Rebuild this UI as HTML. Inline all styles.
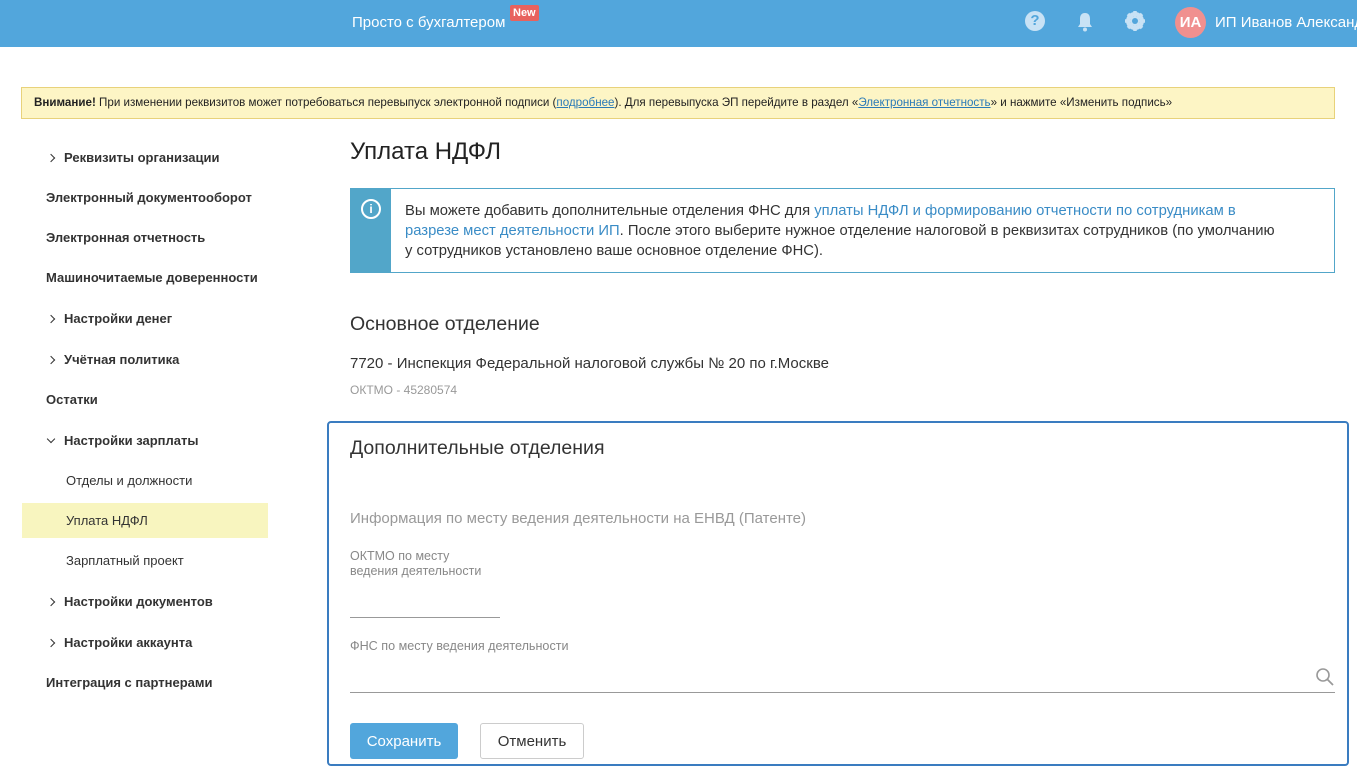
<!DOCTYPE html>
<html><head><meta charset="utf-8"><style>
*{box-sizing:border-box;margin:0;padding:0}
body{width:1357px;height:769px;overflow:hidden;background:#fff;font-family:"Liberation Sans",sans-serif;color:#333;position:relative}
.a{position:absolute;white-space:nowrap}
.hdr{position:absolute;left:0;top:0;width:1357px;height:47px;background:#52a6dc}
.side{font-size:13px;font-weight:bold;color:#333}
.sub{font-size:13px;color:#333}
.chev{display:inline-block;width:6px;height:6px;border-right:1.6px solid #333;border-bottom:1.6px solid #333;transform:rotate(-45deg);margin-right:10px;position:relative;top:-1px}
.chevd{transform:rotate(45deg);top:-3px}
</style></head><body>
<div class="hdr"></div>
<div class="a" style="left:352px;top:14px;font-size:15px;color:#fff">Просто с бухгалтером</div>
<div class="a" style="left:510px;top:5px;background:#e8625e;color:#fff;font-size:11px;font-weight:bold;padding:2px 3px;border-radius:2px">New</div>
<div class="a" style="left:1025px;top:11px;width:20px;height:20px;border-radius:50%;background:#c8e2f5;color:#52a6dc;font-weight:bold;font-size:15px;text-align:center;line-height:20px">?</div>
<svg class="a" style="left:1075px;top:11px" width="20" height="22" viewBox="0 0 20 22"><path d="M10 2c-4 0-5 3-5 6v5l-2 3h14l-2-3V8c0-3-1-6-5-6z" fill="#c8e2f5"/><circle cx="10" cy="18.5" r="2" fill="#c8e2f5"/></svg>
<svg class="a" style="left:1124px;top:10px" width="22" height="22" viewBox="0 0 22 22"><circle cx="11" cy="11" r="7" fill="none" stroke="#c8e2f5" stroke-width="4"/><g stroke="#c8e2f5" stroke-width="3.5"><line x1="11" y1="1" x2="11" y2="21"/><line x1="1" y1="11" x2="21" y2="11"/><line x1="4" y1="4" x2="18" y2="18"/><line x1="18" y1="4" x2="4" y2="18"/></g><circle cx="11" cy="11" r="3" fill="#52a6dc"/></svg>
<div class="a" style="left:1175px;top:7px;width:31px;height:31px;border-radius:50%;background:#f0908f;color:#fff;font-weight:bold;font-size:15px;text-align:center;line-height:31px">ИА</div>
<div class="a" style="left:1215px;top:14px;font-size:15px;color:#fff">ИП Иванов Александ</div>

<div class="a" style="left:21px;top:87px;width:1314px;height:32px;background:#fdf5c5;border:1px solid #e8d27a"></div>
<div class="a" style="left:34px;top:96px;font-size:11.6px;color:#222"><b>Внимание!</b> При изменении реквизитов может потребоваться перевыпуск электронной подписи (<u style="color:#2a7ab8">подробнее</u>). Для перевыпуска ЭП перейдите в раздел «<u style="color:#2a7ab8">Электронная отчетность</u>» и нажмите «Изменить подпись»</div>

<div class="a side" style="left:48px;top:150px"><span class="chev"></span>Реквизиты организации</div>
<div class="a side" style="left:46px;top:190px">Электронный документооборот</div>
<div class="a side" style="left:46px;top:230px">Электронная отчетность</div>
<div class="a side" style="left:46px;top:270px">Машиночитаемые доверенности</div>
<div class="a side" style="left:48px;top:311px"><span class="chev"></span>Настройки денег</div>
<div class="a side" style="left:48px;top:352px"><span class="chev"></span>Учётная политика</div>
<div class="a side" style="left:46px;top:392px">Остатки</div>
<div class="a side" style="left:48px;top:433px"><span class="chev chevd"></span>Настройки зарплаты</div>
<div class="a sub" style="left:66px;top:473px">Отделы и должности</div>
<div class="a" style="left:22px;top:503px;width:246px;height:35px;background:#f8f5bf"></div>
<div class="a sub" style="left:66px;top:513px">Уплата НДФЛ</div>
<div class="a sub" style="left:66px;top:553px">Зарплатный проект</div>
<div class="a side" style="left:48px;top:594px"><span class="chev"></span>Настройки документов</div>
<div class="a side" style="left:48px;top:635px"><span class="chev"></span>Настройки аккаунта</div>
<div class="a side" style="left:46px;top:675px">Интеграция с партнерами</div>

<div class="a" style="left:350px;top:138px;font-size:24px;color:#222">Уплата НДФЛ</div>
<div class="a" style="left:350px;top:188px;width:985px;height:85px;border:1px solid #52a6c9"></div>
<div class="a" style="left:350px;top:188px;width:41px;height:85px;background:#52a6c9"></div>
<div class="a" style="left:361px;top:199px;width:20px;height:20px;border:2px solid #fff;border-radius:50%;color:#fff;font-size:12px;font-weight:bold;text-align:center;line-height:16px">i</div>
<div class="a" style="left:405px;top:201px;font-size:14.8px;line-height:20px;color:#333">Вы можете добавить дополнительные отделения ФНС для <span style="color:#3a8cc6">уплаты НДФЛ и формированию отчетности по сотрудникам в</span><br><span style="color:#3a8cc6">разрезе мест деятельности ИП</span>. После этого выберите нужное отделение налоговой в реквизитах сотрудников (по умолчанию<br>у сотрудников установлено ваше основное отделение ФНС).</div>

<div class="a" style="left:350px;top:313px;font-size:19.5px;color:#333">Основное отделение</div>
<div class="a" style="left:350px;top:355px;font-size:15px;color:#333">7720 - Инспекция Федеральной налоговой службы № 20 по г.Москве</div>
<div class="a" style="left:350px;top:383px;font-size:12px;color:#999">ОКТМО - 45280574</div>

<div class="a" style="left:327px;top:421px;width:1022px;height:345px;border:2px solid #3a7cc0;border-radius:4px"></div>
<div class="a" style="left:350px;top:437px;font-size:19.5px;color:#333">Дополнительные отделения</div>
<div class="a" style="left:350px;top:510px;font-size:15px;color:#999">Информация по месту ведения деятельности на ЕНВД (Патенте)</div>
<div class="a" style="left:350px;top:549px;font-size:12.5px;color:#888;line-height:15px">ОКТМО по месту<br>ведения деятельности</div>
<div class="a" style="left:350px;top:617px;width:150px;height:1px;background:#999"></div>
<div class="a" style="left:350px;top:639px;font-size:12.6px;color:#888">ФНС по месту ведения деятельности</div>
<div class="a" style="left:350px;top:692px;width:985px;height:1px;background:#999"></div>
<svg class="a" style="left:1315px;top:667px" width="20" height="20" viewBox="0 0 20 20"><circle cx="8" cy="8" r="6" fill="none" stroke="#999" stroke-width="1.6"/><line x1="12.5" y1="12.5" x2="18" y2="18" stroke="#999" stroke-width="1.8"/></svg>
<div class="a" style="left:350px;top:723px;width:108px;height:36px;background:#52a6dc;border-radius:3px;color:#fff;font-size:15px;text-align:center;line-height:37px">Сохранить</div>
<div class="a" style="left:480px;top:723px;width:104px;height:36px;border:1px solid #ccc;border-radius:3px;color:#333;font-size:15px;text-align:center;line-height:35px">Отменить</div>
</body></html>
